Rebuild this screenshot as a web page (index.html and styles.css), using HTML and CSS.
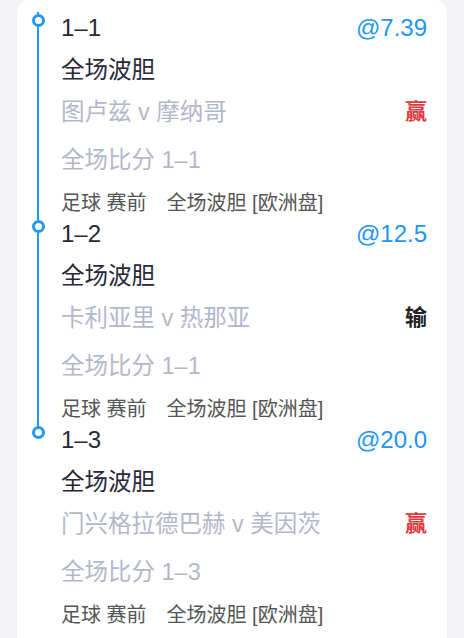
FILE: index.html
```html
<!DOCTYPE html>
<html lang="zh-CN">
<head>
  <meta charset="UTF-8">
  <meta name="viewport" content="width=device-width, initial-scale=1.0">
  <title>注单详情</title>
  <link rel="stylesheet" href="styles.css">
</head>
<body>

  <div class="card">

    <!-- 1-1 -->
    <div class="bet">
      <div class="rail">
        <span class="rail-top"></span>
        <span class="dot"></span>
        <span class="rail-line"></span>
      </div>
      <div class="bet-body">
        <div class="bet-head">
          <span class="pick">1–1</span>
          <span class="odds">@7.39</span>
        </div>
        <div class="market">全场波胆</div>
        <div class="match">
          <span>图卢兹 v 摩纳哥</span>
          <span class="result win">赢</span>
        </div>
        <div class="score">全场比分 1–1</div>
        <div class="tags">足球 赛前<span class="tag-market">全场波胆 [欧洲盘]</span></div>
      </div>
    </div>

    <!-- 1-2 -->
    <div class="bet">
      <div class="rail">
        <span class="rail-top"></span>
        <span class="dot"></span>
        <span class="rail-line"></span>
      </div>
      <div class="bet-body">
        <div class="bet-head">
          <span class="pick">1–2</span>
          <span class="odds">@12.5</span>
        </div>
        <div class="market">全场波胆</div>
        <div class="match">
          <span>卡利亚里 v 热那亚</span>
          <span class="result lose">输</span>
        </div>
        <div class="score">全场比分 1–1</div>
        <div class="tags">足球 赛前<span class="tag-market">全场波胆 [欧洲盘]</span></div>
      </div>
    </div>

    <!-- 1-3 -->
    <div class="bet last">
      <div class="rail">
        <span class="rail-top"></span>
        <span class="dot"></span>
        <span class="rail-line"></span>
      </div>
      <div class="bet-body">
        <div class="bet-head">
          <span class="pick">1–3</span>
          <span class="odds">@20.0</span>
        </div>
        <div class="market">全场波胆</div>
        <div class="match">
          <span>门兴格拉德巴赫 v 美因茨</span>
          <span class="result win">赢</span>
        </div>
        <div class="score">全场比分 1–3</div>
        <div class="tags">足球 赛前<span class="tag-market">全场波胆 [欧洲盘]</span></div>
      </div>
    </div>

  </div>

</body>
</html>
```

FILE: styles.css
```css
body {
  font-family: "Liberation Sans", "Noto Sans CJK SC", sans-serif;
  background-color: #f2f2f7;
  color: #282838;
  margin: 0;
  padding: 0;
}
.card {
  margin: 0 17px;
  padding: 12px 20px 0 14px;
  min-height: 700px;
  background: #ffffff;
  border-radius: 12px 12px 0 0;
}
.bet {
  display: flex;
}
.rail {
  width: 14px;
  display: flex;
  flex-direction: column;
  align-items: center;
  flex-shrink: 0;
}
.rail-top {
  width: 2px;
  height: 2px;
  background: #2196f3;
}
.dot {
  width: 7px;
  height: 7px;
  border: 3.5px solid #2196f3;
  border-radius: 50%;
  background: #ffffff;
}
.rail-line {
  flex: 1;
  width: 2px;
  background: #2196f3;
}
.bet.last .rail-line {
  background: transparent;
}
.bet-body {
  flex: 1;
  margin-left: 16px;
  padding-bottom: 2px;
}
.bet-head, .match {
  display: flex;
  justify-content: space-between;
  align-items: center;
}
.bet-head {
  font-size: 24px;
  line-height: 32px;
}
.pick {
  color: #282838;
}
.odds {
  color: #2196f3;
}
.market {
  margin-top: 10px;
  font-size: 23.5px;
  line-height: 32px;
  color: #282838;
}
.match {
  margin-top: 10px;
  font-size: 23.5px;
  line-height: 32px;
  color: #b4b7cc;
}
.result {
  font-weight: bold;
  font-size: 22px;
}
.win {
  color: #e0393e;
}
.lose {
  color: #222222;
}
.score {
  margin-top: 16px;
  font-size: 23.5px;
  line-height: 32px;
  color: #b4b7cc;
}
.tags {
  margin-top: 14px;
  font-size: 20px;
  line-height: 26px;
  color: #555555;
}
.tag-market {
  margin-left: 20px;
}
```
